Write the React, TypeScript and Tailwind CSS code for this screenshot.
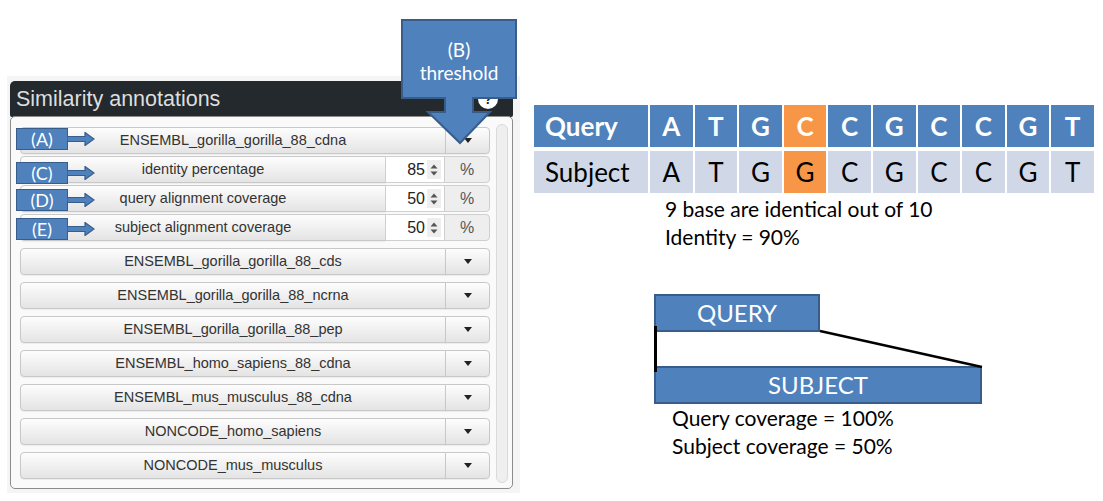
const mainRows = [
  'ENSEMBL_gorilla_gorilla_88_cds',
  'ENSEMBL_gorilla_gorilla_88_ncrna',
  'ENSEMBL_gorilla_gorilla_88_pep',
  'ENSEMBL_homo_sapiens_88_cdna',
  'ENSEMBL_mus_musculus_88_cdna',
  'NONCODE_homo_sapiens',
  'NONCODE_mus_musculus',
];

const subRows = [
  { label: 'identity percentage', value: '85' },
  { label: 'query alignment coverage', value: '50' },
  { label: 'subject alignment coverage', value: '50' },
];

const query = ['A', 'T', 'G', 'C', 'C', 'G', 'C', 'C', 'G', 'T'];
const subject = ['A', 'T', 'G', 'G', 'C', 'G', 'C', 'C', 'G', 'T'];

const btn =
  'border border-[#c8c8c8] bg-linear-to-b from-[#fdfdfd] to-[#e4e4e4] shadow-[0_1px_1px_rgba(0,0,0,0.06)]';

const Caret = () => (
  <span className="block w-0 h-0 border-x-[4px] border-x-transparent border-t-[5px] border-t-[#222]" />
);

const MainRow = ({ label, focused }: { label: string; focused?: boolean }) => (
  <div className="flex h-[27px] w-[470px] text-[14.5px] text-[#333]">
    <div className={`${btn} flex-1 flex items-center justify-center rounded-l-[4px]`}>{label}</div>
    <div
      className={`${btn} w-[45px] flex items-center justify-center rounded-r-[4px] -ml-px ${
        focused ? 'border-[#74a6d8]' : ''
      }`}
    >
      <Caret />
    </div>
  </div>
);

const SubRow = ({ label, value }: { label: string; value: string }) => (
  <div className="flex h-[27px] w-[470px] text-[14.5px] text-[#333]">
    <div className={`${btn} w-[366px] flex items-center justify-center rounded-l-[4px]`}>{label}</div>
    <div className="w-[60px] -ml-px flex items-center justify-end bg-white border border-[#cfcfcf] text-[16px] text-[#222]">
      <span>{value}</span>
      <span className="ml-[2px] mr-[3px] h-[19px] w-[14px] bg-[#eeeeee] flex items-center justify-center">
        <svg width="8" height="12" viewBox="0 0 8 12">
          <path d="M4 0.5 L7.5 4.5 L0.5 4.5 Z" fill="#555" />
          <path d="M0.5 7.5 L7.5 7.5 L4 11.5 Z" fill="#555" />
        </svg>
      </span>
    </div>
    <div className="w-[46px] -ml-px flex items-center justify-center bg-[#eeeeee] border border-[#cfcfcf] rounded-r-[4px] text-[16px] text-[#555]">
      %
    </div>
  </div>
);

const SmallCallout = ({ label, className }: { label: string; className: string }) => (
  <div className={`absolute left-[16px] flex items-center ${className}`}>
    <div className="w-[52px] h-[22px] bg-[#4f81bd] border border-[#385d8a] text-white text-[18px] leading-none flex items-center justify-center font-['Lato',sans-serif]">
      {label}
    </div>
    <svg width="28" height="14" viewBox="0 0 28 14" className="-ml-px">
      <path d="M0 4.5 L18 4.5 L18 0.5 L27 7 L18 13.5 L18 9.5 L0 9.5 Z" fill="#4f81bd" stroke="#385d8a" strokeWidth="1.2" />
    </svg>
  </div>
);

export default function App() {
  return (
    <div className="relative w-[1103px] h-[501px] bg-white overflow-hidden font-['Liberation_Sans',Arial,sans-serif]">
      <div className="flex">
        {/* left panel */}
        <div className="ml-[7px] mt-[76px] w-[513px] h-[417px] bg-[#f5f5f5] pl-[3px] pt-[5px]">
          <div className="w-[503px] h-[36px] bg-[#24292d] rounded-t-[5px] rounded-b-[2px] flex items-center justify-between pl-[6px] pr-[15px]">
            <span className="text-[21.5px] text-[#dedede]">Similarity annotations</span>
            <span className="w-[20px] h-[20px] rounded-full bg-white flex items-center justify-center text-[14px] font-bold text-[#24292d]">
              ?
            </span>
          </div>
          <div className="w-[503px] h-[373px] -mt-px bg-[#fafafa] border border-[#8c8c8c] rounded-[5px] flex pt-[7px] pb-[5px] pl-[9px]">
            <div className="flex flex-col mt-[3px]">
              <MainRow label="ENSEMBL_gorilla_gorilla_88_cdna" focused />
              <div className="flex flex-col gap-[2px] mt-[2px]">
                {subRows.map((r) => (
                  <SubRow key={r.label} label={r.label} value={r.value} />
                ))}
              </div>
              <div className="flex flex-col gap-[7px] mt-[7px]">
                {mainRows.map((r) => (
                  <MainRow key={r} label={r} />
                ))}
              </div>
            </div>
            <div className="ml-[6px] w-[12px] self-stretch rounded-full bg-[#efefef] border border-[#dadada]" />
          </div>
        </div>

        {/* right side */}
        <div className="ml-[14px] mt-[105px] font-['Lato',sans-serif]">
          <div className="grid grid-cols-[114px_repeat(10,42.6px)] gap-x-[2px] gap-y-[4px]">
            <div className="h-[42px] bg-[#4f81bd] text-white font-bold text-[26px] flex items-center pl-[11px]">Query</div>
            {query.map((b, i) => (
              <div
                key={'q' + i}
                className={`h-[42px] text-white font-bold text-[26px] flex items-center justify-center ${
                  i === 3 ? 'bg-[#f79646]' : 'bg-[#4f81bd]'
                }`}
              >
                {b}
              </div>
            ))}
            <div className="h-[42px] bg-[#d0d8e8] text-black text-[26px] flex items-center pl-[11px]">Subject</div>
            {subject.map((b, i) => (
              <div
                key={'s' + i}
                className={`h-[42px] text-black text-[26px] flex items-center justify-center ${
                  i === 3 ? 'bg-[#f79646]' : 'bg-[#d0d8e8]'
                }`}
              >
                {b}
              </div>
            ))}
          </div>
          <div className="ml-[131px] mt-[2px] text-[21px] leading-[28px] text-black">
            <div>9 base are identical out of 10</div>
            <div>Identity = 90%</div>
          </div>

          <div className="ml-[120px] mt-[43px] relative">
            <div className="w-[166px] h-[38px] bg-[#4f81bd] border-2 border-[#385d8a] text-white text-[24px] flex items-center justify-center">
              QUERY
            </div>
            <div className="w-[328px] h-[38px] mt-[34px] bg-[#4f81bd] border-2 border-[#385d8a] text-white text-[24px] flex items-center justify-center">
              SUBJECT
            </div>
            <svg className="absolute left-0 top-0" width="330" height="80" viewBox="0 0 330 80">
              <line x1="1.5" y1="32" x2="1.5" y2="78" stroke="#000" strokeWidth="3" />
              <line x1="166" y1="37" x2="328" y2="73" stroke="#000" strokeWidth="2.5" />
            </svg>
            <div className="ml-[18px] mt-0 text-[21px] leading-[28px] text-black">
              <div>Query coverage = 100%</div>
              <div>Subject coverage = 50%</div>
            </div>
          </div>
        </div>
      </div>

      {/* callouts */}
      <div className="absolute left-[400px] top-[18px] w-[120px] h-[128px]">
        <svg width="120" height="128" viewBox="0 0 120 128" className="absolute left-0 top-0">
          <path
            d="M2 2 L116 2 L116 80 L73 80 L73 94 L90 94 L60 125 L28 94 L45 94 L45 80 L2 80 Z"
            fill="#4f81bd"
            stroke="#385d8a"
            strokeWidth="2"
          />
        </svg>
        <div className="absolute left-[2px] top-[20px] w-[114px] text-center text-white text-[19px] leading-[23px] font-['Lato',sans-serif]">
          <div>(B)</div>
          <div>threshold</div>
        </div>
      </div>
      <SmallCallout label="(A)" className="top-[128px]" />
      <SmallCallout label="(C)" className="top-[162px]" />
      <SmallCallout label="(D)" className="top-[189px]" />
      <SmallCallout label="(E)" className="top-[218px]" />
    </div>
  );
}
